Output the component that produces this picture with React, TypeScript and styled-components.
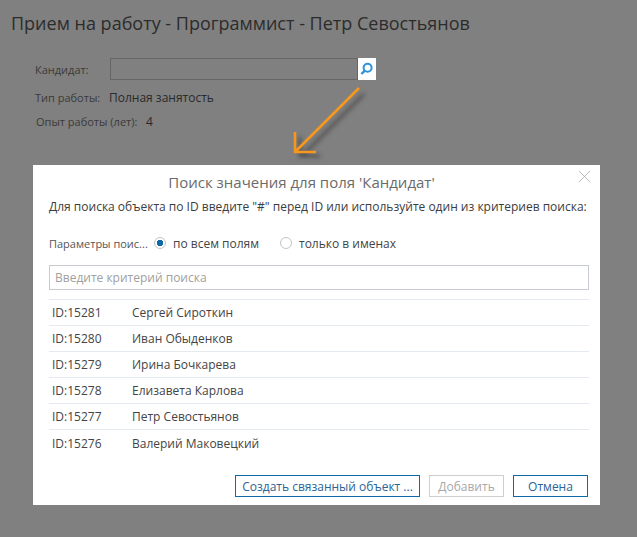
import React from 'react';
import styled, { createGlobalStyle } from 'styled-components';

const GlobalStyle = createGlobalStyle`
  html, body {
    margin: 0;
    height: 100%;
    background: #808080;
    font-family: "Open Sans", "Liberation Sans", sans-serif;
    overflow: hidden;
  }
`;

const Page = styled.div`
  position: relative;
  width: 637px;
  height: 537px;
  background: #808080;
  overflow: hidden;
`;

const PageTitle = styled.h1`
  margin: 0;
  padding: 11px 0 0 11px;
  font-size: 18px;
  line-height: 24px;
  font-weight: 400;
  color: #2c2c2c;
`;

const Form = styled.div`
  display: flex;
  flex-direction: column;
  padding: 23px 0 0 35px;
`;

const FormRow = styled.div<{ $height: number; $indent?: number; $top?: number }>`
  display: flex;
  align-items: center;
  height: ${(p) => p.$height}px;
  margin-top: ${(p) => p.$top ?? 0}px;
  padding-left: ${(p) => p.$indent ?? 0}px;
`;

const FieldLabel = styled.span<{ $width: number }>`
  width: ${(p) => p.$width}px;
  font-size: 11px;
  color: #3a3a3a;
  white-space: nowrap;
`;

const FieldValue = styled.span`
  font-size: 12px;
  color: #2a2a2a;
`;

const LookupInput = styled.div`
  box-sizing: border-box;
  width: 248px;
  height: 22px;
  border: 1px solid #666;
`;

const LookupButton = styled.div`
  display: flex;
  align-items: center;
  justify-content: center;
  width: 18px;
  height: 22px;
  background: #fff;
`;

const Arrow = styled.svg`
  position: absolute;
  left: 280px;
  top: 80px;
`;

const Modal = styled.div`
  position: absolute;
  left: 33px;
  top: 165px;
  box-sizing: border-box;
  width: 567px;
  height: 340px;
  padding: 0 11px 0 16px;
  background: #fff;
  display: flex;
  flex-direction: column;
`;

const CloseIcon = styled.svg`
  position: absolute;
  right: 8px;
  top: 5px;
`;

const ModalTitle = styled.div`
  padding: 6px 35px 0 0;
  text-align: center;
  font-size: 15px;
  line-height: 22px;
  color: #6b6b6b;
`;

const Hint = styled.div`
  margin-top: 5px;
  font-size: 12px;
  line-height: 18px;
  color: #3c3c3c;
  white-space: nowrap;
`;

const OptionsRow = styled.div`
  display: flex;
  align-items: center;
  margin-top: 17px;
  height: 20px;
`;

const OptionsLabel = styled.span`
  font-size: 11px;
  color: #555;
  width: 105px;
  white-space: nowrap;
`;

const RadioOption = styled.label<{ $width: number }>`
  display: flex;
  align-items: center;
  gap: 7px;
  width: ${(p) => p.$width}px;
  font-size: 12px;
  color: #444;
`;

const RadioMark = styled.span<{ $checked?: boolean }>`
  box-sizing: border-box;
  width: 12px;
  height: 12px;
  border-radius: 50%;
  border: 1px solid #c4c4c4;
  background: ${(p) => (p.$checked ? 'radial-gradient(circle, #0f6ba8 0 3px, #fff 3.5px)' : '#fff')};
`;

const SearchInput = styled.div`
  box-sizing: border-box;
  display: flex;
  align-items: center;
  margin-top: 12px;
  height: 25px;
  padding-left: 5px;
  border: 1px solid #c8ccd0;
  font-size: 12px;
  color: #a0a0a0;
`;

const ResultList = styled.div`
  margin-top: 9px;
  border-top: 1px solid #e4eaf0;
`;

const ResultRow = styled.div`
  display: flex;
  align-items: center;
  box-sizing: border-box;
  height: 26px;
  padding-left: 3px;
  border-bottom: 1px solid #e4eaf0;
  font-size: 12px;
  color: #444;
  &:last-child {
    border-bottom: none;
  }
`;

const ResultId = styled.span`
  width: 80px;
`;

const Footer = styled.div`
  display: flex;
  justify-content: flex-end;
  gap: 9px;
  margin-top: 19px;
  padding-right: 1px;
`;

const Button = styled.div<{ $width: number; $disabled?: boolean }>`
  box-sizing: border-box;
  display: flex;
  align-items: center;
  justify-content: center;
  width: ${(p) => p.$width}px;
  height: 22px;
  border: 1px solid ${(p) => (p.$disabled ? '#cfcfcf' : '#0f6ba8')};
  font-size: 12px;
  color: ${(p) => (p.$disabled ? '#a8a8a8' : '#2a6496')};
  white-space: nowrap;
`;

const results = [
  { id: 'ID:15281', name: 'Сергей Сироткин' },
  { id: 'ID:15280', name: 'Иван Обыденков' },
  { id: 'ID:15279', name: 'Ирина Бочкарева' },
  { id: 'ID:15278', name: 'Елизавета Карлова' },
  { id: 'ID:15277', name: 'Петр Севостьянов' },
  { id: 'ID:15276', name: 'Валерий Маковецкий' },
];

const App: React.FC = () => {
  return (
    <Page>
      <GlobalStyle />
      <PageTitle>Прием на работу - Программист - Петр Севостьянов</PageTitle>
      <Form>
        <FormRow $height={22}>
          <FieldLabel $width={75}>Кандидат:</FieldLabel>
          <LookupInput />
          <LookupButton>
            <svg width="14" height="14" viewBox="0 0 14 14" fill="none">
              <circle cx="7.6" cy="5.8" r="4" stroke="#2f93dc" strokeWidth="2" />
              <path d="M4.6 8.8 L1.4 12" stroke="#2f93dc" strokeWidth="2.4" />
            </svg>
          </LookupButton>
        </FormRow>
        <FormRow $height={24} $top={5}>
          <FieldLabel $width={74}>Тип работы:</FieldLabel>
          <FieldValue>Полная занятость</FieldValue>
        </FormRow>
        <FormRow $height={24} $indent={1}>
          <FieldLabel $width={110}>Опыт работы (лет):</FieldLabel>
          <FieldValue>4</FieldValue>
        </FormRow>
      </Form>

      <Arrow width="90" height="90" viewBox="0 0 90 90" fill="none">
        <defs>
          <filter id="arrow-shadow" x="-30%" y="-30%" width="160%" height="160%">
            <feGaussianBlur stdDeviation="2" />
          </filter>
        </defs>
        <path
          d="M80 10 L18 72 M16 53 V72 H36"
          stroke="#3c3c3c"
          strokeOpacity="0.75"
          strokeWidth="3"
          filter="url(#arrow-shadow)"
          transform="translate(4 4)"
        />
        <path d="M79 8 L16 71 M15 52 V72 H36" stroke="#f7981d" strokeWidth="2.6" />
      </Arrow>

      <Modal>
        <CloseIcon width="14" height="14" viewBox="0 0 14 14" fill="none">
          <path d="M1 1 L12 12 M12 1 L1 12" stroke="#a8a8a8" strokeWidth="0.8" />
        </CloseIcon>
        <ModalTitle>Поиск значения для поля 'Кандидат'</ModalTitle>
        <Hint>Для поиска объекта по ID введите "#" перед ID или используйте один из критериев поиска:</Hint>
        <OptionsRow>
          <OptionsLabel>Параметры поис...</OptionsLabel>
          <RadioOption $width={126}>
            <RadioMark $checked />
            по всем полям
          </RadioOption>
          <RadioOption $width={130}>
            <RadioMark />
            только в именах
          </RadioOption>
        </OptionsRow>
        <SearchInput>Введите критерий поиска</SearchInput>
        <ResultList>
          {results.map((r) => (
            <ResultRow key={r.id}>
              <ResultId>{r.id}</ResultId>
              {r.name}
            </ResultRow>
          ))}
        </ResultList>
        <Footer>
          <Button $width={185}>Создать связанный объект ...</Button>
          <Button $width={75} $disabled>
            Добавить
          </Button>
          <Button $width={75}>Отмена</Button>
        </Footer>
      </Modal>
    </Page>
  );
};

export default App;
